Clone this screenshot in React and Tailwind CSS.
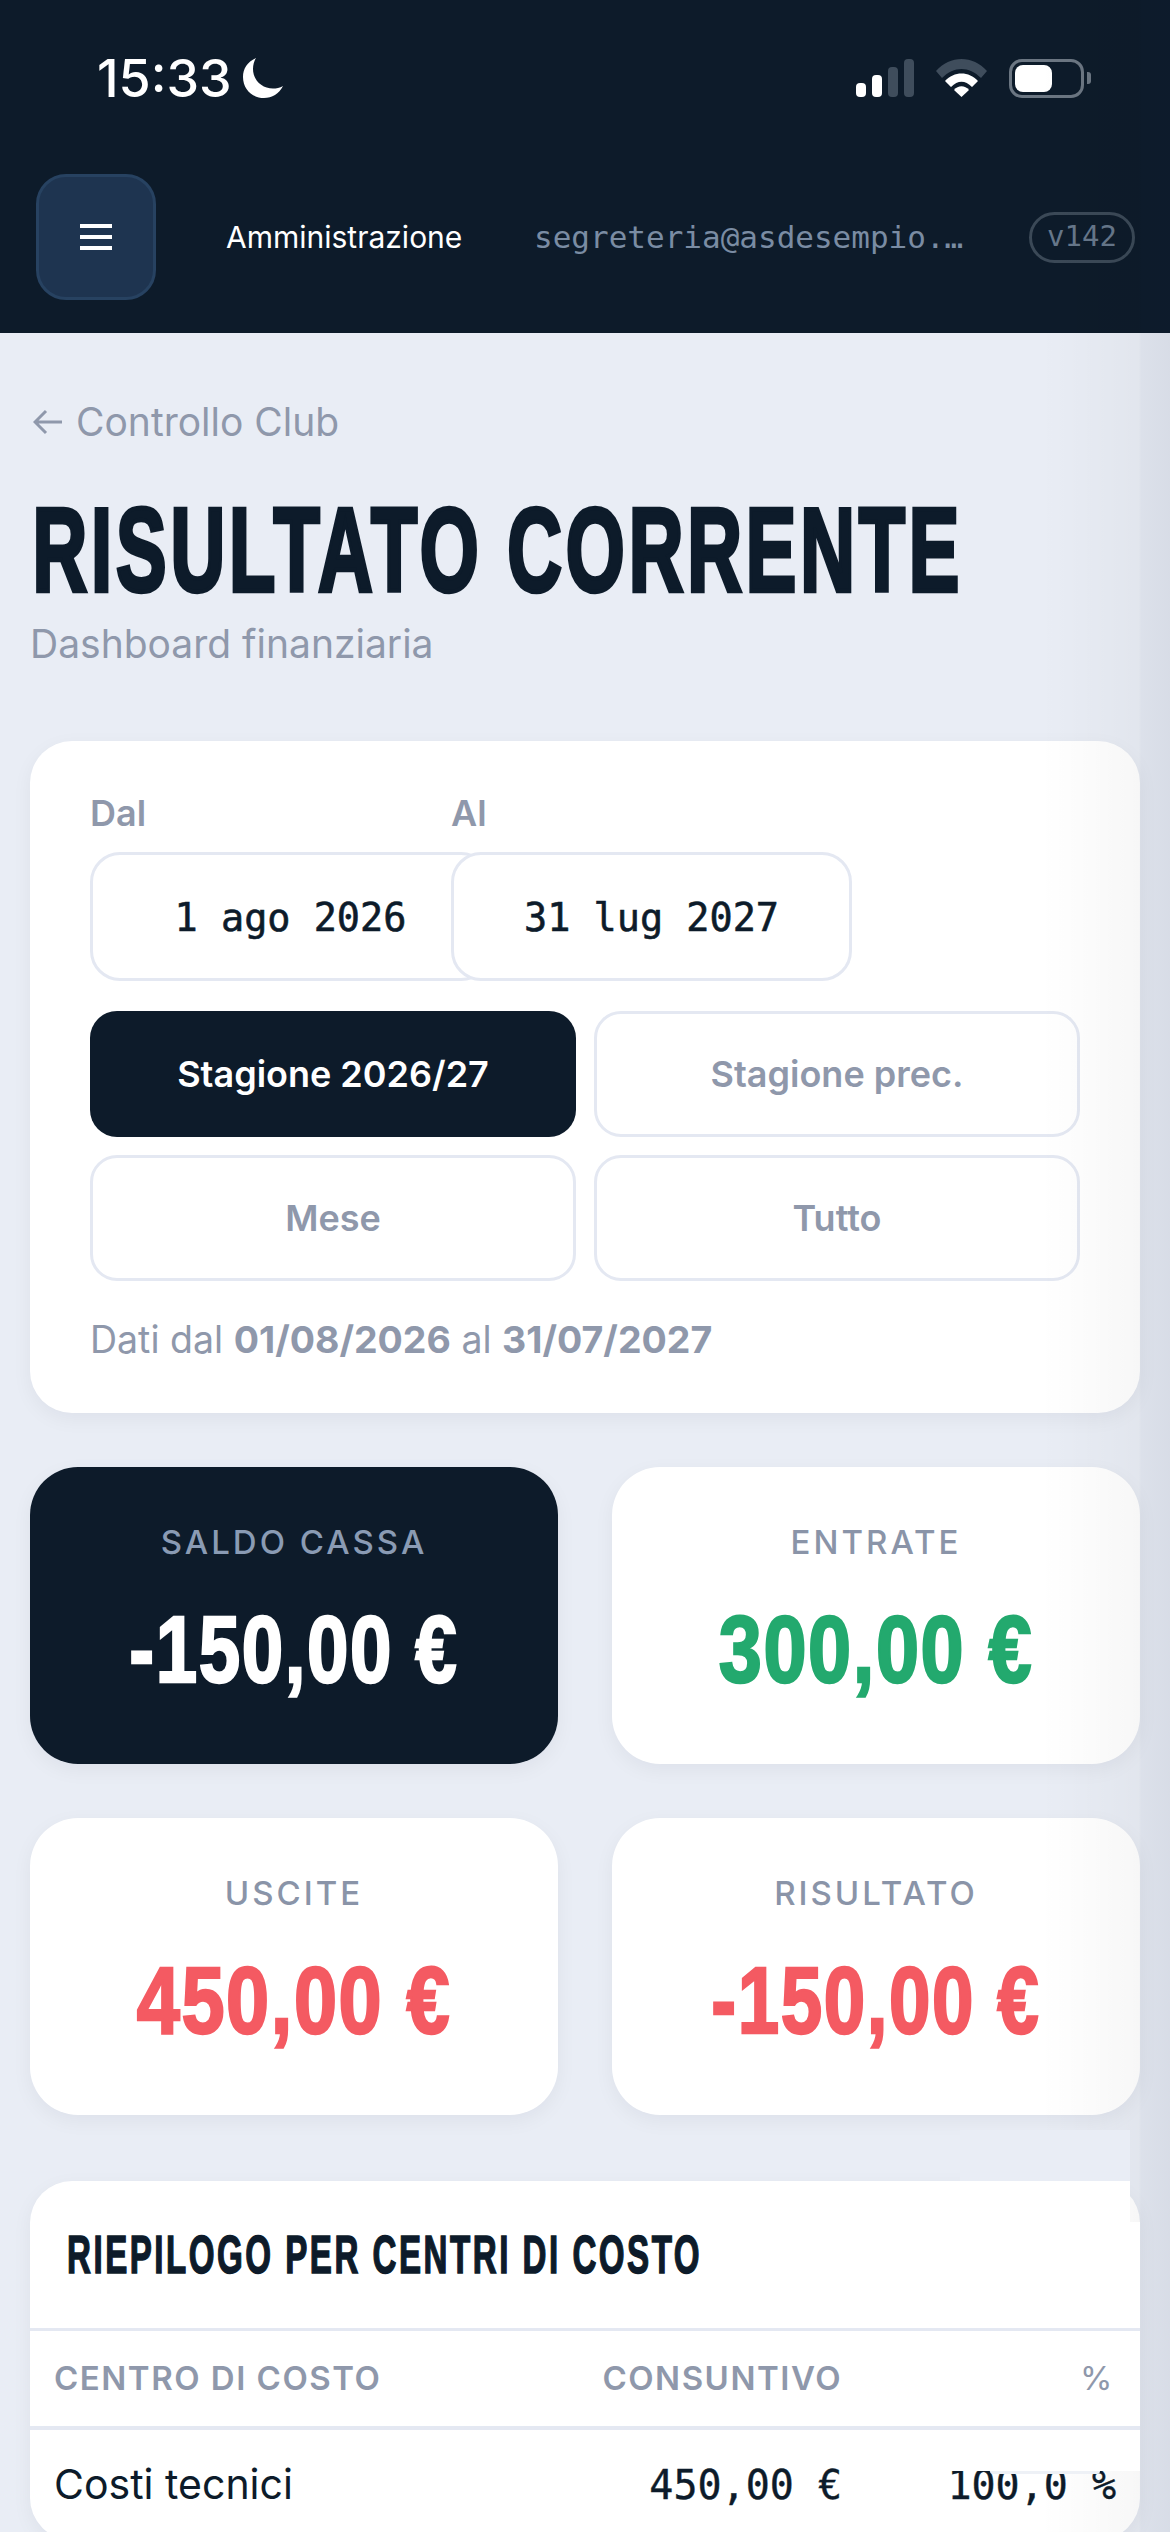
import React from "react";

const INTER = "[font-family:Inter,'Liberation_Sans',sans-serif]";
const MONO = "[font-family:'DejaVu_Sans_Mono','Liberation_Mono',monospace]";
const NARROW = "[font-family:'Liberation_Sans','Arimo',sans-serif]";

function StatusBar() {
  return (
    <div className="flex h-[40px] items-center justify-between pl-[97px] pr-[79px]">
      <div className="flex items-center gap-[10px]">
        <span className={`${INTER} pt-[2px] text-[52px] font-medium leading-[40px] text-white`}>15:33</span>
        <svg width="42" height="42" viewBox="0 0 42 42" fill="#fff">
          <path d="M14 1 C5 5 1 12 1 20 C1 32 10 41 22 41 C30 41 37 37 41 29 C38 31 34 31.500 31 31.500 C20 31.500 11 23 11 12 C11 8 12 4 14 1 Z" />
        </svg>
      </div>
      <div className="flex items-center gap-[22px]">
        <svg width="58" height="38" viewBox="0 0 58 38">
          <rect x="0" y="24" width="10" height="14" rx="4" fill="#fff" />
          <rect x="16" y="16" width="10" height="22" rx="4" fill="#fff" />
          <rect x="32" y="8" width="10" height="30" rx="4" fill="#3f4d5c" />
          <rect x="48" y="0" width="10" height="38" rx="4" fill="#3f4d5c" />
        </svg>
        <svg width="51" height="38" viewBox="0 0 51 38">
          <path d="M0 12 C14 -4 37 -4 51 12 L45 19 C33 7 18 7 6 19 Z" fill="#3f4d5c" />
          <path d="M9 22 C18 12 33 12 42 22 L36 28 C29 21 22 21 15 28 Z" fill="#fff" />
          <path d="M18 31 C22 26 29 26 33 31 L25.500 38 Z" fill="#fff" />
        </svg>
        <div className="flex items-center gap-[3px]">
          <div className="flex h-[39px] w-[75px] items-center rounded-[13px] border-[3px] border-[#6b7682] pl-[3px]">
            <div className="h-[27px] w-[37px] rounded-[8px] bg-white" />
          </div>
          <div className="h-[12px] w-[4px] rounded-r-[3px] bg-[#6b7682]" />
        </div>
      </div>
    </div>
  );
}

function Header() {
  return (
    <header className="h-[333px] bg-[#0d1b2a] pt-[58px]">
      <StatusBar />
      <div className="mt-[76px] flex items-center pl-[36px]">
        <div className="flex h-[126px] w-[120px] items-center justify-center rounded-[30px] border-[3px] border-[#274261] bg-[#1e3450]">
          <div className="flex w-[32px] flex-col gap-[7px]">
            <div className="h-[4px] bg-white" />
            <div className="h-[4px] bg-white" />
            <div className="h-[4px] bg-white" />
          </div>
        </div>
        <span className={`${INTER} ml-[70px] w-[308px] text-[30px] leading-[40px] text-white`}>Amministrazione</span>
        <span className={`${MONO} w-[495px] whitespace-nowrap text-[31px] leading-[40px] text-[#7a8ca3]`}>segreteria@asdesempio.…</span>
        <div className={`${MONO} flex h-[51px] w-[106px] items-center justify-center rounded-[26px] border-[3px] border-[#3b4957] text-[29px] text-[#66778a]`}>v142</div>
      </div>
    </header>
  );
}

function PeriodButton({ label, active }) {
  return (
    <div
      className={
        active
          ? `${INTER} flex h-[126px] items-center justify-center rounded-[27px] bg-[#0d1b2a] text-[36px] font-semibold text-white`
          : `${INTER} flex h-[126px] items-center justify-center rounded-[27px] border-[3px] border-[#e4e8f2] bg-white text-[36px] font-semibold text-[#8f98ab]`
      }
    >
      {label}
    </div>
  );
}

function DateBox({ children }) {
  return (
    <div className={`${MONO} mt-[17px] flex h-[129px] w-[401px] items-center justify-center rounded-[30px] border-[3px] border-[#e4e8f2] bg-white pt-[3px] text-[38.500px] text-[#0d1b2a] [-webkit-text-stroke:0.6px_#0d1b2a]`}>
      {children}
    </div>
  );
}

function FilterCard() {
  return (
    <section className="mt-[73px] rounded-[42px] bg-white px-[60px] pb-[49px] pt-[50px] shadow-[0_6px_20px_rgba(13,27,42,0.05)]">
      <div className="flex">
        <div className="w-[361px]">
          <div className={`${INTER} h-[44px] text-[36px] font-semibold leading-[44px] text-[#8f98ab]`}>Dal</div>
          <DateBox>1 ago 2026</DateBox>
        </div>
        <div className="relative w-[401px]">
          <div className={`${INTER} h-[44px] text-[36px] font-semibold leading-[44px] text-[#8f98ab]`}>Al</div>
          <DateBox>31 lug 2027</DateBox>
        </div>
      </div>
      <div className="mt-[30px] grid grid-cols-2 gap-x-[18px] gap-y-[18px]">
        <PeriodButton label="Stagione 2026/27" active />
        <PeriodButton label="Stagione prec." />
        <PeriodButton label="Mese" />
        <PeriodButton label="Tutto" />
      </div>
      <p className={`${INTER} mt-[35px] h-[48px] text-[37.500px] leading-[48px] text-[#8f98ab]`}>
        Dati dal <b className="font-bold">01/08/2026</b> al <b className="font-bold">31/07/2027</b>
      </p>
    </section>
  );
}

function Stat({ label, value, dark, color, scale }) {
  return (
    <div
      className={
        dark
          ? "flex h-[297px] flex-col items-center rounded-[48px] bg-[#0d1b2a] pt-[55px] shadow-[0_6px_20px_rgba(13,27,42,0.05)]"
          : "flex h-[297px] flex-col items-center rounded-[48px] bg-white pt-[55px] shadow-[0_6px_20px_rgba(13,27,42,0.05)]"
      }
    >
      <div
        className={
          dark
            ? `${INTER} h-[40px] text-[33px] font-medium leading-[40px] tracking-[3px] text-[#8a9bb4]`
            : `${INTER} h-[40px] text-[33px] font-medium leading-[40px] tracking-[3px] text-[#8a94a8]`
        }
      >
        {label}
      </div>
      <div className={`${NARROW} ${color} ${scale} mt-[37px] h-[100px] origin-center whitespace-nowrap text-[95px] font-bold leading-[100px] tracking-[2px] [-webkit-text-stroke:2.500px_currentColor]`}>
        {value}
      </div>
    </div>
  );
}

function TableCard() {
  return (
    <section className="mt-[66px] rounded-[42px] bg-white shadow-[0_6px_20px_rgba(13,27,42,0.05)]">
      <div className="relative z-40 flex h-[150px] items-center border-b-[3px] border-[#e4e8f2] pl-[37px]">
        <h2 className={`${NARROW} origin-left scale-x-[0.625] whitespace-nowrap text-[53px] font-bold tracking-[4px] text-[#0d1b2a] [-webkit-text-stroke:1.500px_#0d1b2a]`}>
          RIEPILOGO PER CENTRI DI COSTO
        </h2>
      </div>
      <div className={`${INTER} relative z-40 flex h-[99px] items-center border-b-[4px] border-[#e4e8f2] pl-[24px] pr-[26px] text-[33px] font-semibold tracking-[1.500px] text-[#8f98ab]`}>
        <div className="flex-1">CENTRO DI COSTO</div>
        <div className="text-right">CONSUNTIVO</div>
        <div className="w-[272px] text-right font-normal">%</div>
      </div>
      <div className="flex h-[110px] items-center pl-[24px] pr-[24px] text-[#0d1b2a]">
        <div className={`${INTER} flex-1 text-[41px]`}>Costi tecnici</div>
        <div className={`${MONO} text-right text-[40px] leading-[48px] [-webkit-text-stroke:0.4px_#0d1b2a]`}>450,00 €</div>
        <div className={`${MONO} w-[274px] text-right text-[40px] leading-[48px] [-webkit-text-stroke:0.4px_#0d1b2a]`}>100,0 %</div>
      </div>
    </section>
  );
}

export default function App() {
  return (
    <div className="relative h-[2532px] w-[1170px] overflow-hidden bg-[#e9edf5]">
      <Header />
      <main className="px-[30px]">
        <div className={`${INTER} mt-[65px] flex h-[48px] items-center gap-[13px] text-[39px] leading-[48px] text-[#8f98ab]`}>
          <svg width="30" height="26" viewBox="0 0 30 26" fill="none" stroke="#8f98ab" strokeWidth="3" className="ml-[3px]">
            <path d="M29 13 H3 M13 2 L2 13 L13 24" />
          </svg>
          <span>Controllo Club</span>
        </div>
        <h1 className={`${NARROW} mt-[44px] h-[120px] origin-left scale-x-[0.637] whitespace-nowrap pl-[4px] text-[119px] font-bold leading-[120px] tracking-[6px] text-[#0d1b2a] [-webkit-text-stroke:4.500px_#0d1b2a]`}>
          RISULTATO CORRENTE
        </h1>
        <p className={`${INTER} mt-[10px] h-[48px] text-[39px] leading-[48px] text-[#8f98ab]`}>Dashboard finanziaria</p>
        <FilterCard />
        <div className="mt-[54px] grid grid-cols-2 gap-[54px]">
          <Stat label="SALDO CASSA" value="-150,00 €" dark color="text-white" scale="scale-x-[0.784]" />
          <Stat label="ENTRATE" value="300,00 €" color="text-[#23a96e]" scale="scale-x-[0.815]" />
          <Stat label="USCITE" value="450,00 €" color="text-[#f45a62]" scale="scale-x-[0.815]" />
          <Stat label="RISULTATO" value="-150,00 €" color="text-[#f45a62]" scale="scale-x-[0.784]" />
        </div>
        <TableCard />
      </main>
      <div className="pointer-events-none absolute bottom-0 right-0 top-0 z-20 w-[130px] bg-[linear-gradient(to_right,transparent_0%,rgba(0,0,0,0.03)_76%,rgba(13,27,60,0.06)_78%,rgba(13,27,60,0.08)_100%)]" />
      <div className="absolute left-[960px] top-[2130px] z-30 h-[51px] w-[170px] bg-[#e9edf5]" />
      <div className="absolute left-[944px] top-[2181px] z-30 h-[41px] w-[186px] bg-white" />
      <div className="absolute left-[944px] top-[2222px] z-30 h-[249px] w-[196px] bg-white" />
      <div className="absolute left-[990px] top-[2471px] z-30 h-[3px] w-[110px] rounded-b-[4px] bg-[#eef1f6]" />
    </div>
  );
}
